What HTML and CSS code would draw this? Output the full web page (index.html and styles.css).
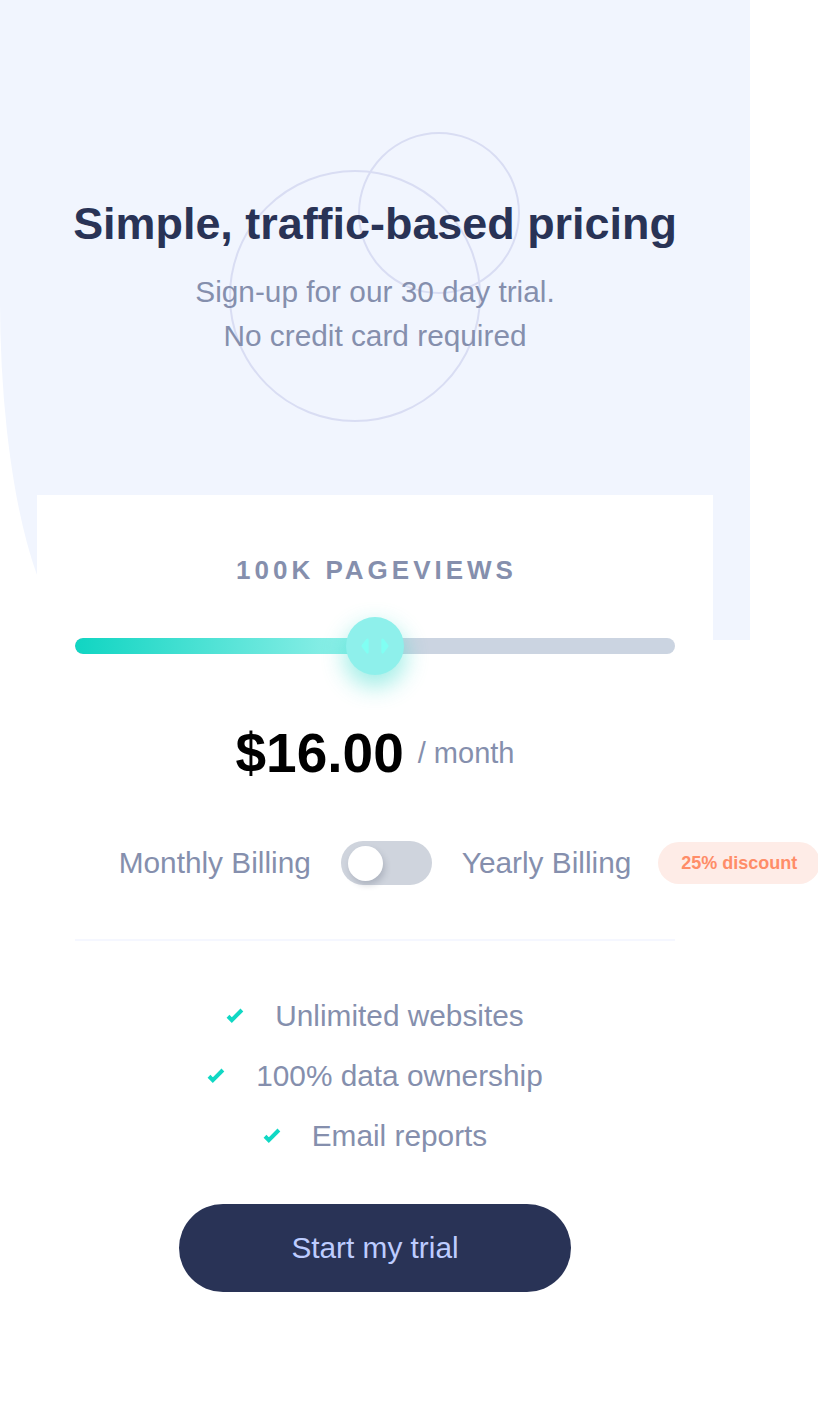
FILE: index.html
```html
<!DOCTYPE html>
<html lang="en">
<head>
<meta charset="utf-8">
<title>Interactive pricing component</title>
<link rel="stylesheet" href="styles.css">
</head>
<body>
<main class="page">
  <header class="hero">
    <svg class="circles" width="300" height="300" viewBox="0 0 300 300" aria-hidden="true">
      <circle cx="126" cy="164" r="125" fill="none" stroke="#d9ddf3" stroke-width="2"/>
      <circle cx="210" cy="81" r="80" fill="none" stroke="#d9ddf3" stroke-width="2"/>
    </svg>
    <h1 class="title">Simple, traffic-based pricing</h1>
    <p class="subtitle">Sign-up for our 30 day trial.<br>No credit card required</p>
  </header>

  <section class="card">
    <p class="views">100K Pageviews</p>

    <div class="slider">
      <div class="track">
        <div class="fill" style="width: 50%"></div>
      </div>
      <div class="thumb" style="left: 50%">
        <svg width="28" height="20" viewBox="0 0 22 13" preserveAspectRatio="none" aria-hidden="true">
          <path fill="#80fff3" d="M16 2.558v7.884a1 1 0 001.735.679l3.639-3.943a1 1 0 000-1.356l-3.64-3.943A1 1 0 0016 2.558zM6 2.558v7.884a1 1 0 01-1.735.679L.626 7.178a1 1 0 010-1.356l3.64-3.943A1 1 0 016 2.558z"/>
        </svg>
      </div>
    </div>

    <div class="price">
      <span class="amount">$16.00</span>
      <span class="period">/ month</span>
    </div>

    <div class="billing">
      <span class="billing-label">Monthly Billing</span>
      <span class="toggle"><span class="knob"></span></span>
      <span class="billing-label yearly">Yearly Billing<span class="badge">25% discount</span></span>
    </div>

    <hr class="divider">

    <ul class="features">
      <li class="feature">
        <svg class="check" width="18" height="16" viewBox="0 0 9 8" aria-hidden="true"><path fill="none" stroke="#10d8c4" stroke-width="2" d="M1 4.134l1.907 1.908L7.949 1"/></svg>
        <span>Unlimited websites</span>
      </li>
      <li class="feature">
        <svg class="check" width="18" height="16" viewBox="0 0 9 8" aria-hidden="true"><path fill="none" stroke="#10d8c4" stroke-width="2" d="M1 4.134l1.907 1.908L7.949 1"/></svg>
        <span>100% data ownership</span>
      </li>
      <li class="feature">
        <svg class="check" width="18" height="16" viewBox="0 0 9 8" aria-hidden="true"><path fill="none" stroke="#10d8c4" stroke-width="2" d="M1 4.134l1.907 1.908L7.949 1"/></svg>
        <span>Email reports</span>
      </li>
    </ul>

    <button class="cta" type="button">Start my trial</button>
  </section>
</main>
</body>
</html>
```

FILE: styles.css
```css
* {
  box-sizing: border-box;
}

html, body {
  margin: 0;
  padding: 0;
  background: #ffffff;
}

body {
  font-family: "Liberation Sans", Arial, sans-serif;
  overflow-x: hidden;
  color: #848ead;
}

.page {
  width: 750px;
}

.hero {
  position: relative;
  height: 640px;
  background: #f1f5fe;
  border-bottom-left-radius: 90px 340px;
  padding-top: 197px;
  text-align: center;
}

.circles {
  position: absolute;
  left: 229px;
  top: 132px;
  pointer-events: none;
}

.title {
  position: relative;
  margin: 0;
  font-size: 44.9px;
  line-height: 54px;
  font-weight: 700;
  color: #293356;
}

.subtitle {
  position: relative;
  margin: 19px 0 0;
  font-size: 29.8px;
  line-height: 44px;
  color: #858fad;
}

.card {
  position: relative;
  margin: -145px 37px 0;
  background: #ffffff;
  padding: 60px 38px 110px;
  display: flex;
  flex-direction: column;
  align-items: center;
}

.views {
  margin: 0;
  font-size: 26px;
  line-height: 30px;
  font-weight: 700;
  letter-spacing: 4px;
  text-transform: uppercase;
  color: #858fad;
  padding-left: 3px;
}

.slider {
  position: relative;
  width: 100%;
  height: 58px;
  margin-top: 32px;
  display: flex;
  align-items: center;
}

.track {
  width: 100%;
  height: 16px;
  border-radius: 8px;
  background: #cbd4e1;
  overflow: hidden;
}

.fill {
  height: 100%;
  border-radius: 8px 0 0 8px;
  background: linear-gradient(to right, #10d5c2, #9cf2ec);
}

.thumb {
  position: absolute;
  top: 0;
  width: 58px;
  height: 58px;
  margin-left: -29px;
  border-radius: 50%;
  background: #8ef0eb;
  box-shadow: 0 10px 22px 2px rgba(36, 215, 197, 0.42);
  display: flex;
  align-items: center;
  justify-content: center;
}

.price {
  margin-top: 46px;
  display: flex;
  align-items: center;
  gap: 14px;
}

.amount {
  font-size: 55px;
  font-weight: 700;
  color: #000000;
}

.period {
  font-size: 29px;
  color: #858fad;
}

.billing {
  margin-top: 56px;
  height: 44px;
  display: flex;
  align-items: center;
  gap: 30px;
}

.billing-label {
  font-size: 29.8px;
  color: #858fad;
}

.yearly {
  position: relative;
}

.toggle {
  position: relative;
  width: 91px;
  height: 44px;
  border-radius: 22px;
  background: #cfd4dd;
}

.knob {
  position: absolute;
  left: 7px;
  top: 4.5px;
  width: 35px;
  height: 35px;
  border-radius: 50%;
  background: #ffffff;
  box-shadow: 2px 4px 6px rgba(60, 70, 90, 0.22);
}

.badge {
  position: absolute;
  left: calc(100% + 27px);
  top: 50%;
  transform: translateY(-50%);
  height: 42px;
  padding: 0 23px;
  border-radius: 21px;
  background: #feece7;
  color: #ff8d68;
  font-size: 18px;
  font-weight: 700;
  line-height: 42px;
  white-space: nowrap;
}

.divider {
  width: 100%;
  height: 2px;
  margin: 54px 0 0;
  border: 0;
  background: #f5f7ff;
}

.features {
  list-style: none;
  margin: 45px 0 0;
  padding: 0;
  display: flex;
  flex-direction: column;
  align-items: center;
}

.feature {
  height: 60px;
  display: flex;
  align-items: center;
  gap: 31px;
  font-size: 29.8px;
  color: #858fad;
}

.check {
  display: block;
  flex: none;
}

.cta {
  margin-top: 38px;
  width: 392px;
  height: 88px;
  border: 0;
  border-radius: 44px;
  background: #293356;
  color: #bdccff;
  font-family: "Liberation Sans", Arial, sans-serif;
  font-size: 29.8px;
  cursor: pointer;
}
```
